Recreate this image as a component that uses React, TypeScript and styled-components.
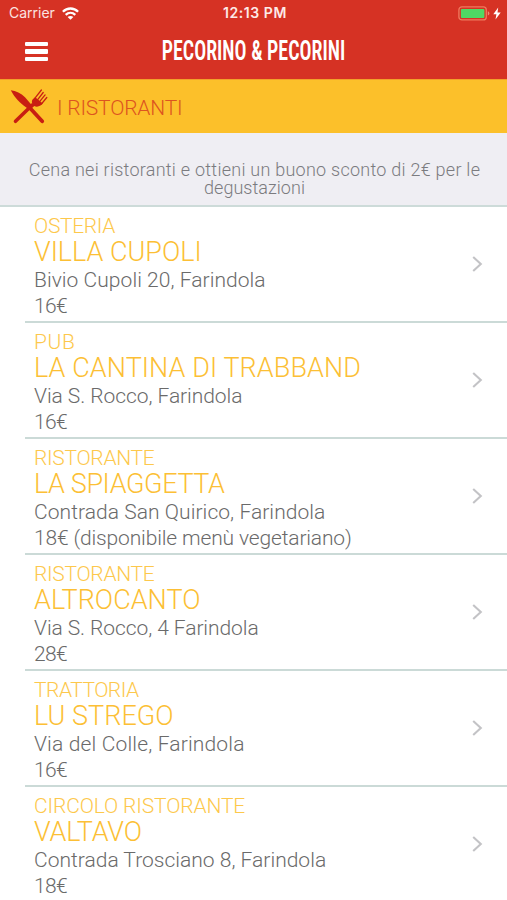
import React from "react";
import styled, { createGlobalStyle } from "styled-components";

const GlobalStyle = createGlobalStyle`
  * { box-sizing: border-box; }
  html, body { margin: 0; padding: 0; background: #fff; }
  body { font-family: Roboto, "Noto Sans", sans-serif; font-weight: 300; overflow: hidden; }
`;

const Screen = styled.div`
  width: 507px;
  height: 900px;
  overflow: hidden;
  background: #fff;
  color: #6a6a6a;
`;

const Header = styled.header`
  height: 79px;
  background: #d63224;
  color: #fff;
`;

const StatusBar = styled.div`
  display: grid;
  grid-template-columns: 1fr auto 1fr;
  align-items: center;
  height: 27px;
  padding: 0 6px 1px 9px;
  font: 400 14px/26px Inter, sans-serif;
`;

const Carrier = styled.div`
  display: flex;
  align-items: center;
  gap: 7px;
  color: #fbe3e0;
`;

const Clock = styled.div`
  font-weight: 600;
  letter-spacing: 0.55px;
  color: #fdeae8;
`;

const Power = styled.div`
  display: flex;
  align-items: center;
  justify-content: flex-end;
  gap: 3px;
`;

const NavBar = styled.div`
  display: grid;
  grid-template-columns: 60px 1fr 60px;
  align-items: center;
  height: 48px;
`;

const MenuButton = styled.button`
  display: flex;
  flex-direction: column;
  gap: 3px;
  width: 48px;
  padding: 1px 0 0 25px;
  border: 0;
  background: none;
`;

const MenuBar = styled.span`
  height: 4.4px;
  border-radius: 1px;
  background: #fff;
`;

const Title = styled.h1`
  margin: 0;
  font: 600 27px/48px "Roboto Condensed", Roboto, sans-serif;
  white-space: nowrap;
  text-align: center;
  transform: scaleX(0.737);
`;

const SectionBand = styled.div`
  display: flex;
  align-items: center;
  gap: 9px;
  height: 54px;
  padding-left: 10px;
  background: #fcc02a;
  border-top: 1px solid #f3a02a;
`;

const SectionTitle = styled.h2`
  margin: 0;
  padding-top: 3px;
  font-size: 21px;
  font-weight: 300;
  line-height: 26px;
  letter-spacing: -0.2px;
  color: #dc5420;
`;

const Notice = styled.div`
  height: 74px;
  padding: 28px 15px 0 17px;
  border-bottom: 2px solid #cddbd9;
  background: #efeef3;
  color: #7b7b7f;
  font-size: 18px;
  line-height: 18px;
  text-align: center;
`;

const NoticeLine = styled.div<{ $tracking: number }>`
  letter-spacing: ${(p) => p.$tracking}px;
`;

const List = styled.ul`
  margin: 0;
  padding: 0;
  list-style: none;
`;

const Row = styled.li`
  display: flex;
  align-items: center;
  justify-content: space-between;
  height: 116px;
  margin-left: 25px;
  padding: 0 24px 0 9px;
  border-bottom: 2px solid #cbdad7;
  white-space: nowrap;
`;

const Details = styled.div`
  height: 114px;
  padding-top: 6px;
`;

interface Tracked {
  $tracking?: number;
}

const Kind = styled.div<Tracked>`
  font-size: 21px;
  line-height: 26px;
  letter-spacing: ${(p) => p.$tracking ?? 0}px;
  color: #fdc84c;
`;

const Name = styled.div<Tracked>`
  margin-bottom: 2px;
  font-size: 27px;
  line-height: 26px;
  letter-spacing: ${(p) => p.$tracking ?? 0}px;
  color: #fcbf35;
`;

const Line = styled.div<Tracked>`
  font-size: 21px;
  line-height: 26px;
  letter-spacing: ${(p) => p.$tracking ?? 0}px;
`;

const Chevron = () => (
  <svg width="11" height="16" viewBox="0 0 11 16" fill="none" stroke="#c3c3c6" strokeWidth="2.1">
    <path d="M1.2 1L8.8 8L1.2 15" />
  </svg>
);

const Wifi = () => (
  <svg width="17" height="13" viewBox="0 0 17 13" fill="none" stroke="#fff" strokeWidth="2.3">
    <path d="M.9 4.8C5.2.4 11.8.4 16.1 4.8" />
    <path d="M3.7 7.9C6.5 5.2 10.5 5.2 13.3 7.9" />
    <path d="M8.5 12.8L5.6 10C7.3 8.6 9.7 8.6 11.4 10Z" fill="#fff" stroke="none" />
  </svg>
);

const Battery = () => (
  <svg width="32" height="15" viewBox="0 0 32 15">
    <rect x=".9" y=".9" width="27.4" height="13" rx="3" fill="none" stroke="#ee7a5e" strokeWidth="1.3" />
    <rect x="2.9" y="2.9" width="23.5" height="9" rx="1" fill="#4fd964" />
    <path d="M29.8 5.2Q31.4 5.8 31.4 7.4Q31.4 9 29.8 9.6Z" fill="#ee8a78" />
  </svg>
);

const Bolt = () => (
  <svg width="8" height="13" viewBox="0 0 8 13">
    <path d="M5.2.5L.3 7.2H3.4L2.5 12.5L7.7 5.4H4.5Z" fill="#fff" />
  </svg>
);

const Cutlery = () => (
  <svg width="38" height="36" viewBox="0 0 38 36" fill="none" stroke="#c81e12" strokeLinecap="round">
    <path d="M5.5 32.3L22 16.2" strokeWidth="3.6" />
    <path d="M19.5 18.5L32.2 32.3" strokeWidth="3.8" />
    <path d="M.8 1.2C6 1.6 11 4.2 15 8.2L23 17.5L19.6 21.2L16 18.2C10.5 14.2 4.8 9 .8 1.2Z" fill="#c81e12" stroke="none" />
    <path d="M23 10L25.2 8.2L32.8 14.6L30.5 16.6C28.2 18 26 18 24.3 17L21.4 19.3L19.4 17L22.3 14.4C21.6 12.8 21.8 11.4 23 10Z" fill="#c81e12" stroke="none" />
    <path d="M24.6 9.7L31.4 1M26.9 11.6L33.2 3.5M29.2 13.2L35.1 5.9M31.4 15L36.8 8.5" strokeWidth="1.25" />
  </svg>
);

const restaurants = [
  { kind: "OSTERIA", kt: -0.34, name: "VILLA CUPOLI", nt: 0, address: "Bivio Cupoli 20, Farindola", at: 0.05, price: "16€", pt: -0.65 },
  { kind: "PUB", kt: 0.6, name: "LA CANTINA DI TRABBAND", nt: 0.08, address: "Via S. Rocco, Farindola", at: -0.06, price: "16€", pt: -0.65 },
  { kind: "RISTORANTE", kt: -0.3, name: "LA SPIAGGETTA", nt: -0.39, address: "Contrada San Quirico, Farindola", at: 0.06, price: "18€ (disponibile menù vegetariano)", pt: -0.15 },
  { kind: "RISTORANTE", kt: -0.3, name: "ALTROCANTO", nt: 0.02, address: "Via S. Rocco, 4 Farindola", at: -0.08, price: "28€", pt: -0.65 },
  { kind: "TRATTORIA", kt: -0.5, name: "LU STREGO", nt: 0.05, address: "Via del Colle, Farindola", at: 0.16, price: "16€", pt: -0.65 },
  { kind: "CIRCOLO RISTORANTE", kt: -0.14, name: "VALTAVO", nt: -0.12, address: "Contrada Trosciano 8, Farindola", at: 0.01, price: "18€", pt: -0.65 },
];

export default function App() {
  return (
    <Screen>
      <GlobalStyle />
      <Header>
        <StatusBar>
          <Carrier>
            Carrier
            <Wifi />
          </Carrier>
          <Clock>12:13 PM</Clock>
          <Power>
            <Battery />
            <Bolt />
          </Power>
        </StatusBar>
        <NavBar>
          <MenuButton aria-label="Menu">
            <MenuBar />
            <MenuBar />
            <MenuBar />
          </MenuButton>
          <Title>PECORINO &amp; PECORINI</Title>
        </NavBar>
      </Header>
      <SectionBand>
        <Cutlery />
        <SectionTitle>I RISTORANTI</SectionTitle>
      </SectionBand>
      <Notice>
        <NoticeLine $tracking={0.25}>Cena nei ristoranti e ottieni un buono sconto di 2€ per le</NoticeLine>
        <NoticeLine $tracking={0.03}>degustazioni</NoticeLine>
      </Notice>
      <List>
        {restaurants.map((r) => (
          <Row key={r.name}>
            <Details>
              <Kind $tracking={r.kt}>{r.kind}</Kind>
              <Name $tracking={r.nt}>{r.name}</Name>
              <Line $tracking={r.at}>{r.address}</Line>
              <Line $tracking={r.pt}>{r.price}</Line>
            </Details>
            <Chevron />
          </Row>
        ))}
      </List>
    </Screen>
  );
}
